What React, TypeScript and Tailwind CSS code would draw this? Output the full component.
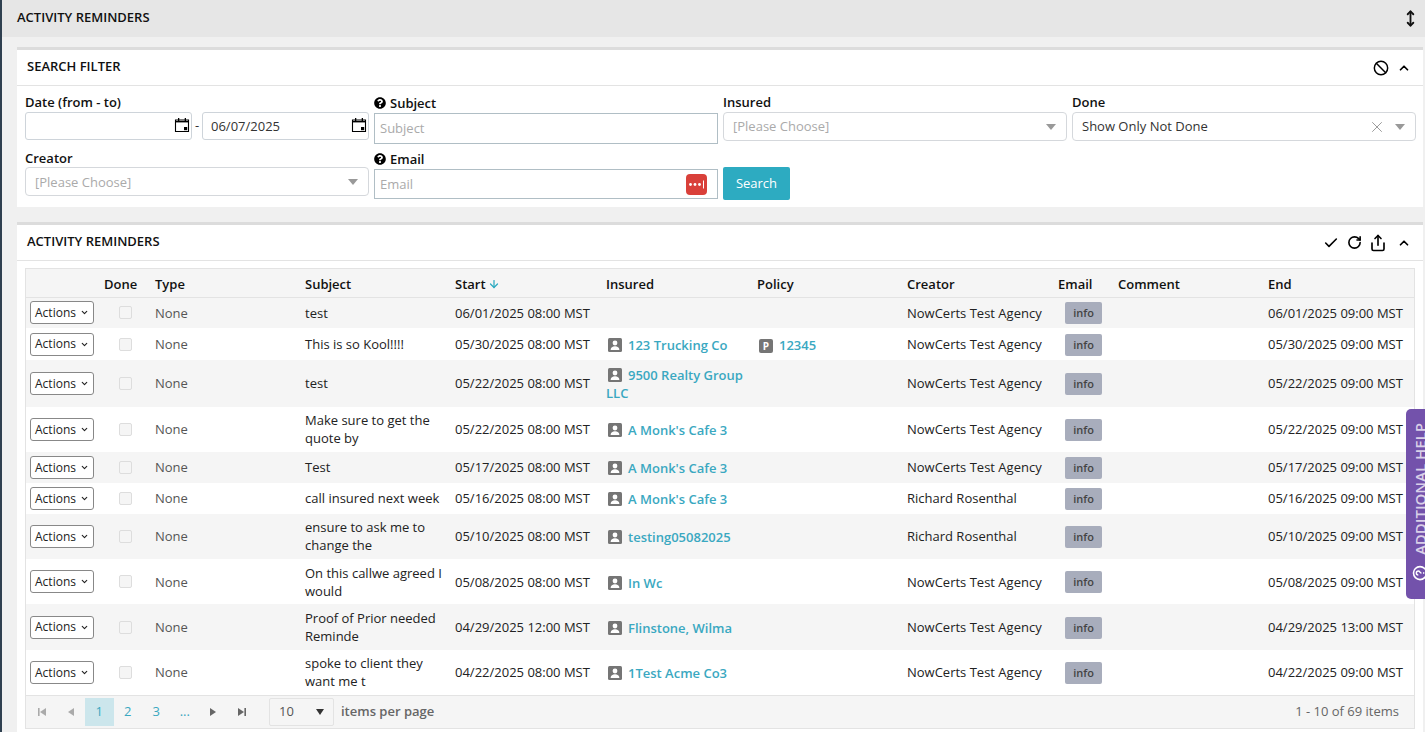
import { ArrowDown, Ban, Check, ChevronDown, ChevronUp, MoveVertical, RotateCw, Share, X } from "lucide-react";
import { FaQuestionCircle } from "react-icons/fa";

// t: nudge for plain text cells, l: nudge for the link cells
const rows = [
  { h: "h-[31px]", t: "", l: "", subject: "test", start: "06/01/2025 08:00 MST", insured: "", policy: "", creator: "NowCerts Test Agency", end: "06/01/2025 09:00 MST" },
  { h: "h-[32px]", t: "pb-px", l: "pt-[2px]", subject: "This is so Kool!!!!", start: "05/30/2025 08:00 MST", insured: "123 Trucking Co", policy: "12345", creator: "NowCerts Test Agency", end: "05/30/2025 09:00 MST" },
  { h: "h-[47px]", t: "pb-px", l: "", subject: "test", start: "05/22/2025 08:00 MST", insured: "9500 Realty Group LLC", policy: "", creator: "NowCerts Test Agency", end: "05/22/2025 09:00 MST" },
  { h: "h-[45px]", t: "pb-px", l: "", subject: "Make sure to get the quote by", start: "05/22/2025 08:00 MST", insured: "A Monk's Cafe 3", policy: "", creator: "NowCerts Test Agency", end: "05/22/2025 09:00 MST" },
  { h: "h-[31px]", t: "pb-px", l: "", subject: "Test", start: "05/17/2025 08:00 MST", insured: "A Monk's Cafe 3", policy: "", creator: "NowCerts Test Agency", end: "05/17/2025 09:00 MST" },
  { h: "h-[31px]", t: "pb-px", l: "", subject: "call insured next week", start: "05/16/2025 08:00 MST", insured: "A Monk's Cafe 3", policy: "", creator: "Richard Rosenthal", end: "05/16/2025 09:00 MST" },
  { h: "h-[45px]", t: "pb-px", l: "", subject: "ensure to ask me to change the", start: "05/10/2025 08:00 MST", insured: "testing05082025", policy: "", creator: "Richard Rosenthal", end: "05/10/2025 09:00 MST" },
  { h: "h-[45px]", t: "", l: "pt-[2px]", subject: "On this callwe agreed I would", start: "05/08/2025 08:00 MST", insured: "In Wc", policy: "", creator: "NowCerts Test Agency", end: "05/08/2025 09:00 MST" },
  { h: "h-[46px]", t: "pb-px", l: "pt-[2px]", subject: "Proof of Prior needed Reminde", start: "04/29/2025 12:00 MST", insured: "Flinstone, Wilma", policy: "", creator: "NowCerts Test Agency", end: "04/29/2025 13:00 MST" },
  { h: "h-[45px]", t: "pb-px", l: "", subject: "spoke to client they want me t", start: "04/22/2025 08:00 MST", insured: "1Test Acme Co3", policy: "", creator: "NowCerts Test Agency", end: "04/22/2025 09:00 MST" },
];

const columns = [
  { label: "", w: "w-[74px]" },
  { label: "Done", w: "w-[51px]" },
  { label: "Type", w: "w-[150px]" },
  { label: "Subject", w: "w-[150px]" },
  { label: "Start", w: "w-[151px]" },
  { label: "Insured", w: "w-[151px]" },
  { label: "Policy", w: "w-[150px]" },
  { label: "Creator", w: "w-[151px]" },
  { label: "Email", w: "w-[60px]" },
  { label: "Comment", w: "w-[150px]" },
  { label: "End", w: "w-[150px]" },
];

const CalendarIcon = () => (
  <svg viewBox="0 0 16 16" className="h-[16px] w-[16px] text-black">
    <path d="M1.500 3h13v11.500h-13z" fill="none" stroke="currentColor" strokeWidth="1.100" />
    <path d="M1.500 4h13v1.400h-13z" fill="currentColor" />
    <path d="M4 1h1.300v3H4zM10.700 1H12v3h-1.300z" fill="currentColor" />
    <path d="M10 10h3.200v3.200H10z" fill="currentColor" />
  </svg>
);

const PersonIcon = () => (
  <svg viewBox="0 0 14 14" className="mr-[6px] inline-block h-[14px] w-[14px] align-[-2px]">
    <rect width="14" height="14" rx="1.500" fill="#757575" />
    <circle cx="7" cy="5" r="2.400" fill="#fff" />
    <path d="M2.600 12c0-2.600 2-3.800 4.400-3.800s4.400 1.200 4.400 3.800z" fill="#fff" />
  </svg>
);

const Caret = () => <span className="h-0 w-0 border-x-[5px] border-t-[6px] border-x-transparent border-t-[#999]" />;

const FilterLabel = ({ text, help, tall }: { text: string; help?: boolean; tall?: boolean }) => {
  if (help) {
    return (
      <div className={`flex items-end gap-[4px] pb-px text-[13px] leading-[18px] font-semibold text-[#111] ${tall ? "h-[21px]" : "h-[20px]"}`}>
        <FaQuestionCircle className="mb-[3px] h-[12px] w-[12px] text-black" />
        {text}
      </div>
    );
  }
  return <div className={`text-[13px] leading-[18px] font-semibold text-[#111] ${tall ? "h-[20px] pt-px" : "h-[18px]"}`}>{text}</div>;
};

const DateBox = ({ value }: { value?: string }) => (
  <div className="flex h-[28px] w-[167px] items-center justify-between rounded-[3px] border border-[#ced4da] bg-white pr-px pl-[8px] text-[13px] text-[#333]">
    <span className="pt-[2px]">{value}</span>
    <span className="-mt-[3px]"><CalendarIcon /></span>
  </div>
);

const SelectBox = ({ text, clear, low }: { text: string; clear?: boolean; low?: boolean }) => (
  <div className="flex h-[29px] items-center rounded-[4px] border border-[#d5d8dc] bg-white pr-[10px] pl-[9px] text-[13px]">
    <span className={`flex-1 ${clear ? "text-[#333]" : "text-[#aaa]"} ${low ? "pt-[2px]" : ""}`}>{text}</span>
    {clear && <X className="mr-[9px] h-[18px] w-[18px] text-[#999]" strokeWidth={1.300} />}
    <Caret />
  </div>
);

const PanelHeader = ({ title, children }: { title: string; children: React.ReactNode }) => (
  <div className="flex h-[36px] items-center justify-between border-b border-[#e3e3e3] pr-[12px] pl-[10px]">
    <span className="pb-px text-[13px] font-semibold text-[#111] uppercase">{title}</span>
    <div className="flex items-center gap-[8px] text-black">{children}</div>
  </div>
);

const PagerGlyph = ({ d, dark }: { d: string; dark?: boolean }) => (
  <span className="flex h-[28px] w-[28.500px] items-center justify-center">
    <svg viewBox="0 0 10 10" className="h-[10px] w-[10px]">
      <path d={d} fill={dark ? "#666" : "#aaa"} />
    </svg>
  </span>
);

export default function App() {
  return (
    <div className="relative h-[732px] overflow-hidden border-l-2 border-[#2f4050] bg-[#f0f0f0] font-['Open_Sans',sans-serif]">
      <div className="flex h-[37px] items-center justify-between bg-[#e6e6e6] pr-[6px] pl-[15px]">
        <span className="pb-px text-[13px] font-semibold text-[#111] uppercase">Activity Reminders</span>
        <MoveVertical className="h-[17px] w-[17px] text-[#111]" strokeWidth={2.600} />
      </div>

      <div className="mt-[10px] mr-[2px] ml-[15px] h-[160px] border-t-[3px] border-[#dcdcdc] bg-white">
        <PanelHeader title="Search Filter">
          <Ban className="h-[16px] w-[16px]" strokeWidth={2.200} />
          <ChevronUp className="h-[14px] w-[14px]" strokeWidth={3} />
        </PanelHeader>
        <div className="grid grid-cols-4 gap-x-[5px] pt-[6px] pr-[7px] pl-[8px]">
          <div className="h-[57px]">
            <FilterLabel text="Date (from - to)" tall />
            <div className="flex items-center justify-between text-[13px] text-[#333]">
              <DateBox />
              <span>-</span>
              <DateBox value="06/07/2025" />
            </div>
          </div>
          <div>
            <FilterLabel text="Subject" help tall />
            <div className="flex h-[31px] items-center border border-[#b0bec5] bg-white pl-[5px] text-[13px] text-[#aaa]">Subject</div>
          </div>
          <div>
            <FilterLabel text="Insured" tall />
            <SelectBox text="[Please Choose]" />
          </div>
          <div>
            <FilterLabel text="Done" tall />
            <SelectBox text="Show Only Not Done" clear />
          </div>
          <div>
            <FilterLabel text="Creator" />
            <SelectBox text="[Please Choose]" low />
          </div>
          <div>
            <FilterLabel text="Email" help />
            <div className="flex h-[30px] items-center justify-between border border-[#b0bec5] bg-white pr-[10px] pl-[5px] text-[13px] text-[#aaa]">
              <span className="pt-px">Email</span>
              <span className="flex h-[21px] w-[21px] items-center justify-center rounded-[4px] bg-[#d9403a] text-white">
                <svg viewBox="0 0 21 21" className="h-[21px] w-[21px]">
                  <circle cx="4.500" cy="10.500" r="1.400" fill="#fff" />
                  <circle cx="9" cy="10.500" r="1.400" fill="#fff" />
                  <circle cx="13.500" cy="10.500" r="1.400" fill="#fff" />
                  <path d="M17.500 6.500v8" stroke="#fff" strokeWidth="1" />
                </svg>
              </span>
            </div>
          </div>
          <div>
            <button className="mt-[18px] h-[33px] w-[67px] rounded-[2px] bg-[#2dabc1] text-[13px] text-white">Search</button>
          </div>
        </div>
      </div>

      <div className="mt-[15px] mr-[2px] ml-[15px] h-[520px] border-t-[3px] border-[#dcdcdc] bg-white">
        <PanelHeader title="Activity Reminders">
          <Check className="h-[16px] w-[16px]" strokeWidth={2.400} />
          <RotateCw className="h-[15px] w-[15px]" strokeWidth={2.600} />
          <Share className="-ml-px h-[18px] w-[18px]" strokeWidth={2.200} />
          <ChevronUp className="ml-[2px] h-[14px] w-[14px]" strokeWidth={3} />
        </PanelHeader>
        <div className="mt-[7px] mr-[8px] ml-[8px] border border-[#e3e3e3]">
          <table className="w-full table-fixed border-collapse text-[13px] leading-[18px]">
            <colgroup>
              {columns.map((c) => (
                <col key={c.label} className={c.w} />
              ))}
            </colgroup>
            <thead>
              <tr className="h-[28px] border-b border-[#e3e3e3] bg-[#f5f5f5]">
                {columns.map((c) => (
                  <th key={c.label} className="px-[4px] pt-[2px] text-left font-semibold text-[#111]">
                    {c.label}
                    {c.label === "Start" && <ArrowDown className="ml-[2px] inline-block h-[12px] w-[12px] align-[-1px] text-[#2dabc1]" strokeWidth={2.500} />}
                  </th>
                ))}
              </tr>
            </thead>
            <tbody>
              {rows.map((r, i) => (
                <tr key={i} className={`${r.h} ${i % 2 === 0 ? "bg-[#f5f5f5]" : "bg-white"}`}>
                  <td className="px-[4px]">
                    <button className="flex h-[23px] w-[64px] items-center justify-center gap-[4px] rounded-[3px] border border-[#888] bg-white text-[12px] text-[#222]">
                      Actions
                      <ChevronDown className="h-[9px] w-[9px]" strokeWidth={3} />
                    </button>
                  </td>
                  <td className="px-[4px]">
                    <div className="mx-auto h-[13px] w-[13px] rounded-[2px] border border-[#ddd] bg-[#f5f5f5]" />
                  </td>
                  <td className={`px-[4px] text-[#555] ${r.t}`}>None</td>
                  <td className={`px-[4px] text-[#222] ${r.t}`}>{r.subject}</td>
                  <td className={`px-[4px] text-[#222] ${r.t}`}>{r.start}</td>
                  <td className={`px-[4px] font-semibold text-[#3aa8c1] ${r.l}`}>
                    {r.insured && (
                      <>
                        <span className="pl-[2px]"><PersonIcon /></span>
                        {r.insured}
                      </>
                    )}
                  </td>
                  <td className={`px-[4px] font-semibold text-[#3aa8c1] ${r.l}`}>
                    {r.policy && (
                      <>
                        <span className="mr-[6px] ml-[2px] inline-flex h-[14px] w-[14px] items-center justify-center rounded-[2px] bg-[#757575] align-[0px] text-[10px] font-bold text-white">P</span>
                        {r.policy}
                      </>
                    )}
                  </td>
                  <td className={`px-[4px] text-[#222] ${r.t}`}>{r.creator}</td>
                  <td className="px-[4px]">
                    <span className="mt-px mr-[3px] ml-auto flex h-[22px] w-[37px] -translate-x-[5px] items-center justify-center rounded-[2px] bg-[#a8adbc] text-[11px] font-semibold text-[#444]">info</span>
                  </td>
                  <td className="px-[4px]" />
                  <td className={`px-[4px] text-[#222] ${r.t}`}>{r.end}</td>
                </tr>
              ))}
            </tbody>
          </table>
          <div className="flex h-[33px] items-center border-t border-[#e3e3e3] bg-[#f5f5f5] pr-[15px] pl-[2px] text-[13px]">
            <PagerGlyph d="M1 1h1.600v8H1zM9 1v8L3 5z" />
            <PagerGlyph d="M8 1v8L2 5z" />
            <span className="flex h-[28px] w-[28.500px] items-center justify-center bg-[#cce6ec] text-[#3aa8c1]">1</span>
            <span className="flex h-[28px] w-[28.500px] items-center justify-center text-[#3aa8c1]">2</span>
            <span className="flex h-[28px] w-[28.500px] items-center justify-center text-[#3aa8c1]">3</span>
            <span className="flex h-[28px] w-[28.500px] items-center justify-center text-[#3aa8c1]">...</span>
            <PagerGlyph d="M2 1v8l6-4z" dark />
            <PagerGlyph d="M1 1v8l6-4zM7.400 1H9v8H7.400z" dark />
            <div className="ml-[13px] flex h-[28px] w-[65px] items-center justify-between rounded-[2px] border border-[#e3e3e3] bg-[#f5f5f5] pr-[9px] pl-[9px] text-[#555]">
              10
              <span className="h-0 w-0 border-x-[4px] border-t-[6px] border-x-transparent border-t-[#333]" />
            </div>
            <span className="ml-[7px] font-semibold text-[#666]">items per page</span>
            <span className="ml-auto text-[#666]">1 - 10 of 69 items</span>
          </div>
        </div>
      </div>

      <div className="absolute top-[409px] right-0 h-[190px] w-[19px] overflow-hidden rounded-l-[5px] bg-[#7352ab]">
        <div className="mt-[14px] ml-[3px] flex w-[22px] items-center gap-[10px] text-[15px] font-semibold whitespace-nowrap text-[#d9d0e8] [writing-mode:vertical-rl] rotate-180">
          <svg viewBox="0 0 16 16" className="h-[16px] w-[16px] rotate-90">
            <circle cx="8" cy="8" r="6.500" fill="none" stroke="#fff" strokeWidth="1.600" />
            <path d="M6 6.300c0-2.600 4-2.600 4 0 0 1.700-2 1.600-2 3.200M8 11v1.300" fill="none" stroke="#fff" strokeWidth="1.500" />
          </svg>
          ADDITIONAL HELP
        </div>
      </div>
    </div>
  );
}
